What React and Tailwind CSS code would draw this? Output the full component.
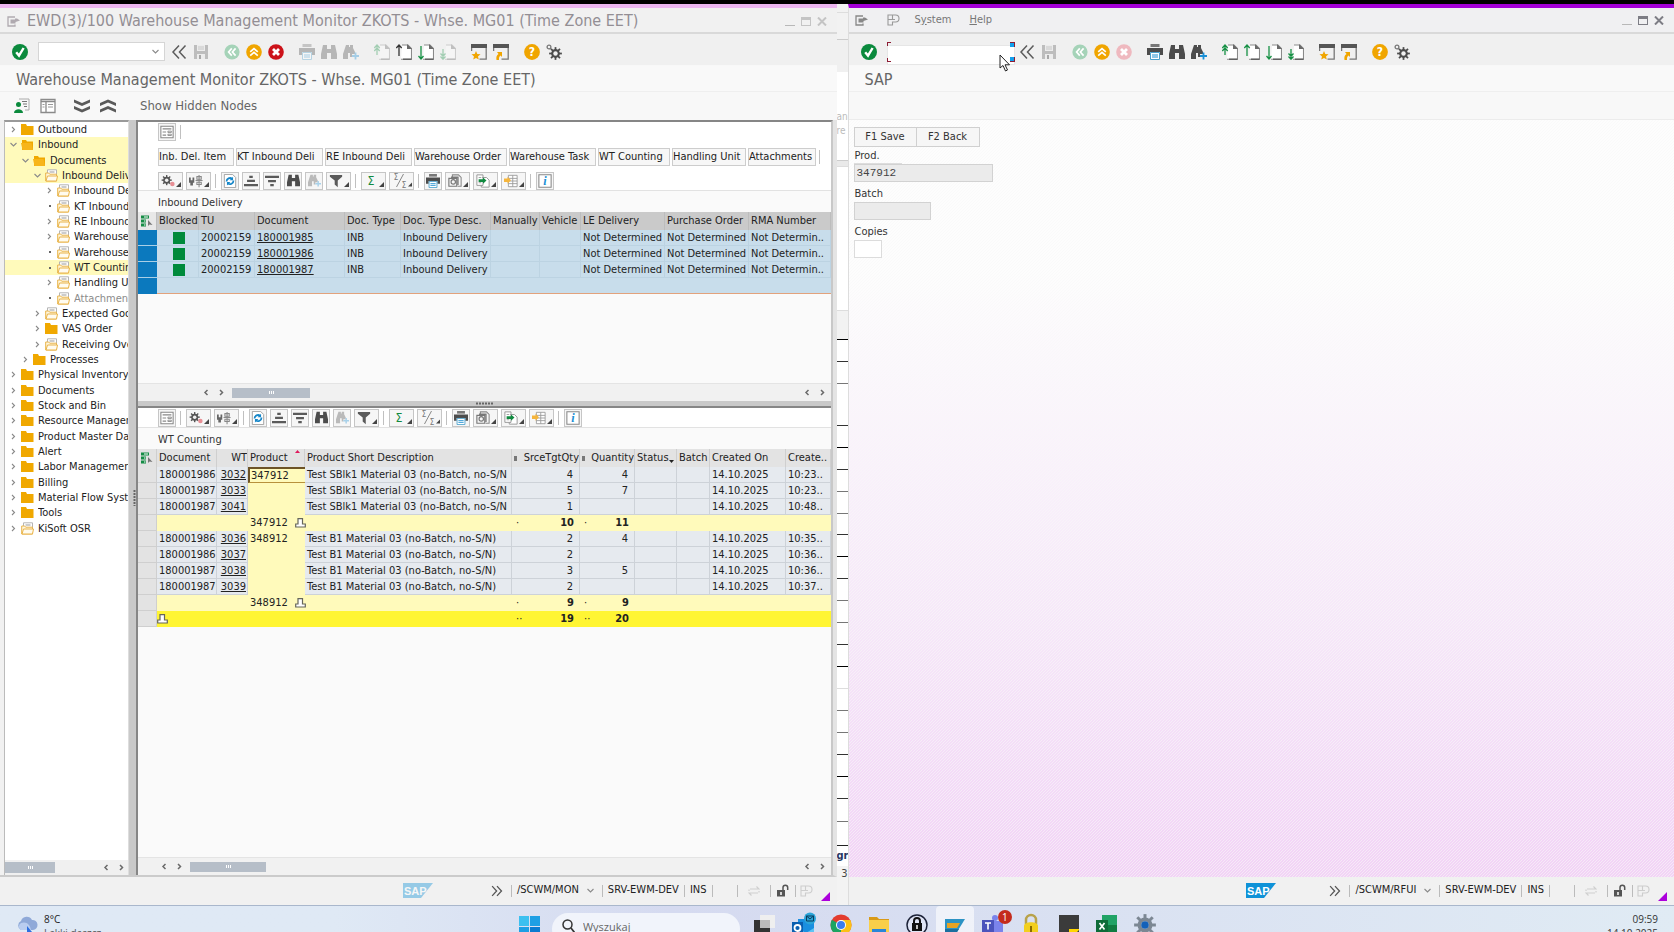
import clsx from "clsx";

const UI = "font-['DejaVu_Sans_Condensed','DejaVu_Sans',sans-serif]";

/* ---------- icons ---------- */

const Svg = ({ size = 16, box = 16, className, children }) => (
  <svg
    width={size}
    height={size}
    viewBox={`0 0 ${box} ${box}`}
    fill="none"
    className={clsx("shrink-0", className)}
    aria-hidden="true"
  >
    {children}
  </svg>
);

const CheckIcon = () => (
  <Svg>
    <circle cx="8" cy="8" r="8" fill="#0b8a3d" />
    <path d="M4.2 8.2 7 11.6 11.6 4" stroke="#fff" strokeWidth="2.4" />
  </Svg>
);

const BackIcon = () => (
  <Svg>
    <circle cx="8" cy="8" r="7.6" fill="#a5d3b8" />
    <path d="M7.8 4.4 4.6 8l3.2 3.6M11.6 4.4 8.4 8l3.2 3.6" stroke="#fff" strokeWidth="1.7" />
  </Svg>
);

const UpIcon = () => (
  <Svg>
    <circle cx="8" cy="8" r="7.8" fill="#f0a500" />
    <path d="M4.2 7.8 8 4.6l3.8 3.2M4.2 11.6 8 8.4l3.8 3.2" stroke="#fff" strokeWidth="1.7" />
  </Svg>
);

const CancelIcon = ({ faded }) => (
  <Svg>
    <circle cx="8" cy="8" r="7.8" fill={faded ? "#efb9bf" : "#cc1219"} />
    <path d="m5 5 6 6M11 5l-6 6" stroke="#fff" strokeWidth="2.8" />
  </Svg>
);

const DoubleLeftIcon = () => (
  <Svg>
    <path d="M8 1.5 2 8l6 6.5M14.5 1.5 8.5 8l6 6.5" stroke="#5c5c5c" strokeWidth="1.5" />
  </Svg>
);

const DoubleRightIcon = () => (
  <Svg size={12}>
    <path d="m1.5 1.5 6 6.5-6 6.5M8 1.5l6 6.5-6 6.5" stroke="#555" strokeWidth="1.7" />
  </Svg>
);

const SaveIcon = () => (
  <Svg>
    <path d="M1 1h14v14H1z" fill="#bdbdbd" />
    <path d="M4 1h8v6H4zM4 10h8v5H4z" fill="#ececec" />
    <path d="M5 3h6M5 5h6" stroke="#c6c6c6" />
    <path d="M6 11h2v4H6z" fill="#a8a8a8" />
  </Svg>
);

const PrintIcon = ({ faded, size }) => (
  <Svg size={size} className={faded ? "opacity-35" : ""}>
    <path d="M3.5 0h9v3h-9z" fill="#777" />
    <path d="M0 4h16v7h-3V8H3v3H0z" fill="#4c4c4c" />
    <path d="M3.5 8.5h9v7h-9z" fill="#fff" stroke="#4aa0cc" />
    <path d="M5 11h6M5 13h6" stroke="#1f8fd0" />
  </Svg>
);

const BinocIcon = ({ faded, plus, size }) => (
  <Svg size={size} className={faded ? "opacity-35" : ""}>
    {plus ? (
      <>
        <path d="M3 1h3v2h1V1h3v3l2 4v2H9v3H7V9H5v6H0v-5l2-6z" fill="#4c4c4c" />
        <path d="M12.5 8.5v7M9 12h7" stroke="#1a8fd6" strokeWidth="1.8" />
      </>
    ) : (
      <path d="M2 1h4v4h4V1h4l2 9v5h-6V9H6v6H0v-5z" fill="#4c4c4c" />
    )}
  </Svg>
);

const PageIcon = ({ down, end, dark, faded }) => (
  <Svg className={faded ? "opacity-35" : ""}>
    <path d="M6 1h6l3.5 3.5v10.7H5" stroke="#8a8a8a" strokeWidth="1.1" fill="#fff" />
    <path d="M11 0v5h5z" fill="#6a6a6a" />
    <path d="M7 15.2h8.5" stroke="#555" strokeWidth="1.3" />
    {down ? (
      <path
        d={end ? "M3 5v10M.5 9.5 3 12.2l2.5-2.7M.5 12.5 3 15.2l2.5-2.7" : "M3 2v13M.5 12 3 15l2.5-3"}
        stroke={dark ? "#333" : "#179145"}
        strokeWidth="1.3"
      />
    ) : (
      <path
        d={end ? "M3 11V1M.3 4 3 1l2.7 3M.3 7 3 4l2.7 3" : "M3 12V1M.3 4 3 1l2.7 3"}
        stroke={dark ? "#333" : "#179145"}
        strokeWidth="1.3"
      />
    )}
  </Svg>
);

const SessionIcon = ({ shortcut }) => (
  <Svg>
    <path d="M0 0h16v4H0z" fill="#555" />
    <path d="M15.2 4v11.2H8.5M.6 4v3" stroke="#777" strokeWidth="1.3" />
    {shortcut ? (
      <path d="M3.5 16c-.5-3 .2-4.8 2-6L4 8h5v5l-1.4-1.6c-1.4 1-1.8 2.3-1.6 4.6z" fill="#f0a500" />
    ) : (
      <path d="m5 7 1.3 3 3.2.3L7 12.4l.8 3.2L5 14l-2.8 1.6.8-3.2L.5 10.3l3.2-.3z" fill="#f0a500" />
    )}
  </Svg>
);

const HelpIcon = () => (
  <Svg>
    <circle cx="8" cy="8" r="7.9" fill="#f0a500" />
    <text x="8" y="12.2" textAnchor="middle" fontSize="12" fontWeight="bold" fill="#fff">
      ?
    </text>
  </Svg>
);

const TEETH = [0, 45, 90, 135, 180, 225, 270, 315];

const GearShape = ({ cx, cy, r, color, hole = "#f1f1f1" }) => (
  <g>
    {TEETH.map((a) => (
      <rect
        key={a}
        x={cx - r * 0.2}
        y={cy - r * 1.45}
        width={r * 0.4}
        height={r * 0.8}
        fill={color}
        transform={`rotate(${a} ${cx} ${cy})`}
      />
    ))}
    <circle cx={cx} cy={cy} r={r} fill={color} />
    <circle cx={cx} cy={cy} r={r * 0.5} fill={hole} />
  </g>
);

const GearIcon = () => (
  <Svg>
    <GearShape cx={9.5} cy={9.5} r={4.4} color="#4c4c4c" />
    <circle cx="3" cy="3" r="1.9" stroke="#777" strokeWidth="1.3" />
  </Svg>
);

const MenuIcon = ({ light }) => (
  <svg width="13" height="11" viewBox="0 0 13 11" fill="none" className="shrink-0" aria-hidden="true">
    <path d="M8 1H1v9h7V8.5" stroke={light ? "#b0aab0" : "#888"} strokeWidth="1.3" />
    <path d="M3.5 3.5H8v-1h2l3 2L8.5 6v1.5h-5z" fill={light ? "#b0aab0" : "#888"} />
  </svg>
);

const PIcon = ({ className, color = "#9a9a9a" }) => (
  <svg width="13" height="12" viewBox="0 0 13 12" fill="none" className={clsx("shrink-0", className)} aria-hidden="true">
    <path d="M1 1h7.5a3.5 3.5 0 0 1 0 7h-3v3H1zM5.5 1v4.5H8M1 5.5h4.5" stroke={color} strokeWidth="1.1" />
  </svg>
);

const UserListIcon = () => (
  <Svg>
    <path d="M5 1h10v11h-4" stroke="#aaa" />
    <path d="M8 3.5h5M9 6h4M10 8.5h3" stroke="#777" />
    <circle cx="4.5" cy="6.5" r="2.5" fill="#0b8a3d" />
    <path d="M0 15c0-5 9-5 9 0z" fill="#0b8a3d" />
  </Svg>
);

const LayoutIcon = () => (
  <Svg>
    <path d="M1 1.5h14v13H1z" fill="#fff" stroke="#8a8a8a" strokeWidth="1.3" />
    <path d="M1 3.5h14M6 3.5v11" stroke="#8a8a8a" strokeWidth="1.3" />
    <path d="M2.5 6.5h2M2.5 9h2M8 6.5h5M8 9h5" stroke="#999" />
  </Svg>
);

const DoubleDown = ({ up }) => (
  <Svg className={up ? "rotate-180" : ""}>
    <path d="M0 1.5 8 5l8-3.5v3L8 8 0 4.500zM0 8l8 3.500L16 8v3l-8 3.500L0 11z" fill="#5a5a5a" />
  </Svg>
);

const FolderIcon = ({ kind }) => (
  <Svg size={13} box={13}>
    {kind === "closed" && <path d="M0 1h5l1 2h6.5v9H0z" fill="#f0a800" />}
    {kind === "open" && (
      <>
        <path d="M1 2h4l1 1.5h6V12H1z" fill="#f0a800" />
        <path d="M0 5h10.5L12 12H1.5z" fill="#f7b51b" />
      </>
    )}
    {kind === "list" && (
      <>
        <path d="M2.5 6V.8h9V6" stroke="#b5b5b5" fill="#fff" />
        <path d="M4.5 3h5" stroke="#999" />
        <path d="M.7 12V4h3l1 1.2h6.8V12z" fill="#fff6dc" stroke="#e9b44a" />
        <path d="M1 12 2.5 7h10l-1 5z" fill="#fffbef" stroke="#e9b44a" />
      </>
    )}
  </Svg>
);

const FormIcon = () => (
  <Svg size={14}>
    <path d="M1 1.5h14v13H1z" fill="#fff" stroke="#888" strokeWidth="1.2" />
    <path d="M3 4.5h10M3 8h4M3 11.5h4" stroke="#888" strokeWidth="1.4" />
    <path d="M9 7h4v1.5H9zM9 10.5h4V12H9z" stroke="#888" />
  </Svg>
);

const RowGearIcon = () => (
  <Svg size={14}>
    <GearShape cx={6.5} cy={7} r={4} color="#555" />
    <circle cx="13" cy="11.5" r="2.6" fill="#e88f95" />
  </Svg>
);

const PlugIcon = () => (
  <Svg size={14}>
    <path d="M0 4h2v3h2V4h2v6H4.5v3h-3v-3H0z" fill="#666" />
    <path d="M9 3h5v3H9zM7.5 7.5h8M9 9.5h5V12H9zM11.5 1v14" stroke="#888" strokeWidth="1.2" />
  </Svg>
);

const RefreshIcon = () => (
  <Svg size={14}>
    <path d="M1.5.5H11L14.5 4v11.5h-13z" fill="#fff" stroke="#999" />
    <path d="M4 8.5a4 4 0 0 1 6.5-3M12 7.5a4 4 0 0 1-6.5 3.2" stroke="#1787c9" strokeWidth="2" />
    <path d="M11.5 3v4h-4zM4.5 13V9h4z" fill="#1787c9" />
  </Svg>
);

const SortIcon = ({ desc }) => (
  <Svg size={14} className={desc ? "rotate-180" : ""}>
    <path d="M6 2h4v2.6H6zM3.5 6.5h9v2.6h-9zM0 11.5h16v2.6H0z" fill="#5a5a5a" />
  </Svg>
);

const FilterIcon = () => (
  <Svg size={14}>
    <path d="M1 1h14v2l-5 4.5V15l-3.5-3V7.5L1 3z" fill="#5a5a5a" />
  </Svg>
);

const SumIcon = () => (
  <Svg size={14}>
    <text x="8" y="13" textAnchor="middle" fontSize="14" fill="#128a40">
      Σ
    </text>
  </Svg>
);

const SubtotalIcon = () => (
  <Svg size={16}>
    <text x="4" y="7" textAnchor="middle" fontSize="8" fill="#777">
      Σ
    </text>
    <path d="M11.5 1 4.5 14" stroke="#888" />
    <text x="12" y="14.5" textAnchor="middle" fontSize="8" fill="#777">
      Σ
    </text>
  </Svg>
);

const ViewsIcon = () => (
  <Svg size={14}>
    <path d="M5 4V1h7l3 3v10h-4" stroke="#888" strokeWidth="1.2" />
    <path d="M1 5h9v9H1zM3.5 3.5h8v9" stroke="#777" strokeWidth="1.3" />
    <circle cx="6" cy="9" r="2.5" stroke="#777" strokeWidth="1.3" />
  </Svg>
);

const ExportIcon = () => (
  <Svg size={14}>
    <path d="M1 1h7v12H1zM7 4h5l3 3v8H6v-2" fill="#fff" stroke="#999" strokeWidth="1.1" />
    <path d="M3 4h3M3 10h3" stroke="#999" />
    <path d="M3 6h5V4l4 3.5L8 11V9H3z" fill="#118a40" />
  </Svg>
);

const GridIcon = () => (
  <Svg size={14}>
    <path d="M5 1.5h10v13H5zM5 5h10M5 8h10M5 11h10M10 1.5v13" fill="#fff" stroke="#999" />
    <path d="M0 5h4V3l4 4-4 4V9H0z" fill="#f5b53c" />
  </Svg>
);

const InfoIcon = () => (
  <Svg size={14}>
    <path d="M1 .8h14v14.4H1z" fill="#fff" stroke="#888" strokeWidth="1.2" />
    <text x="8" y="13" textAnchor="middle" fontSize="14" fontStyle="italic" fontFamily="Liberation Serif" fontWeight="bold" fill="#1a8fd6">
      i
    </text>
  </Svg>
);

const PickIcon = () => (
  <Svg size={12} box={12}>
    <path d="M0 .5h8v3H0zM0 4.5h5v3H0zM0 8.5h5v3H0z" fill="#158c45" />
    <path d="M3 2h4M3 6h1.5M3 10h1.5" stroke="#fff" />
    <path d="M7 5v6l1.5-1.5 3 .5z" fill="#777" />
  </Svg>
);

const TotalIcon = () => (
  <svg width="11" height="10" viewBox="0 0 11 10" fill="none" className="inline-block" aria-hidden="true">
    <path d="M3 .7h4.5V6h2.8v3H.7V6H3z" fill="#fff" stroke="#66665a" strokeWidth="1.2" />
  </svg>
);

const Lock = () => (
  <svg width="12" height="13" viewBox="0 0 12 13" fill="none" aria-hidden="true">
    <path d="M0 6h8v6.5H0z" fill="#555" />
    <path d="M6 6V3.5a2.3 2.3 0 0 1 4.7 0V6" stroke="#555" strokeWidth="1.5" />
    <path d="M4 8v3" stroke="#fff" strokeWidth="1.5" />
  </svg>
);

const SwapIcon = () => (
  <svg width="12" height="10" viewBox="0 0 12 10" fill="none" aria-hidden="true">
    <path d="M2 3h9L8.5.5M10 7H1l2.5 2.5M1 5V3.5M11 5v1.5" stroke="#cfcfcf" strokeWidth="1.2" />
  </svg>
);

const SapLogo = ({ faded }) => (
  <svg width="30" height="15" viewBox="0 0 30 15" className={faded ? "opacity-40" : ""} aria-hidden="true">
    <path d="M0 0h30L18 15H0z" fill="#0f92d8" />
    <text x="1" y="11.5" fontSize="11" fontWeight="bold" fontFamily="Liberation Sans Narrow, Liberation Sans" fill="#fff">
      SAP
    </text>
  </svg>
);

/* ---------- shared window parts ---------- */

const WindowControls = ({ light }) => (
  <div className={clsx("flex items-center gap-[6px]", light ? "text-[#c4c4c4]" : "text-[#7d7d85]")}>
    <button aria-label="Minimize" className="flex h-2.5 w-2.5 items-end">
      <span className="h-px w-full bg-[#b8b8b8]" />
    </button>
    <button aria-label="Maximize" className="h-[9px] w-2.5 border border-t-3 border-current" />
    <button aria-label="Close">
      <svg width="10" height="9" viewBox="0 0 10 9" aria-hidden="true">
        <path d="m1 .5 8 8M9 .5l-8 8" stroke="currentColor" strokeWidth="2" />
      </svg>
    </button>
  </div>
);

const ToolButton = ({ label, children }) => (
  <button aria-label={label} className="flex h-4 w-4 items-center justify-center">
    {children}
  </button>
);

const CommandBar = ({ active }) => (
  <div className="flex h-8 shrink-0 items-center border-b border-[#f8f8f8] bg-[#f0f0f0] pt-1 pl-3">
    <ToolButton label="Enter">
      <CheckIcon />
    </ToolButton>
    {active ? (
      <div className="relative ml-2.5 h-5 w-32">
        <input aria-label="Command" className="h-full w-full border border-[#e6e6e6] bg-white px-1 text-[11px] outline-none" />
        <span className="absolute top-0 left-0 h-1 w-1 border-t border-l border-[#8d1c34]" />
        <span className="absolute bottom-0 left-0 h-1 w-1 border-b border-l border-[#8d1c34]" />
        <span className="absolute top-0 right-0 h-[5px] w-[5px] border-t border-r border-[#8d1c34] bg-[#12a0ec]" />
        <span className="absolute right-0 bottom-0 h-[5px] w-[5px] border-r border-b border-[#8d1c34] bg-[#12a0ec]" />
        <svg width="12" height="18" viewBox="0 0 12 18" className="absolute top-3 left-28 z-10" aria-hidden="true">
          <path d="M1 1v13l3-2.5L6.500 17l2-1L6 10.800h4.500z" fill="#fff" stroke="#222" />
        </svg>
      </div>
    ) : (
      <div className="ml-2.5 flex h-[19px] w-[127px] items-center border border-[#d5d5d5] bg-white pr-1">
        <input aria-label="Command" className="h-full w-0 flex-1 px-1 text-[11px] outline-none" />
        <button aria-label="Command history">
          <Chevron dir="down" />
        </button>
      </div>
    )}
    <div className={clsx("flex gap-1.5", active ? "ml-1" : "ml-1.5")}>
      <ToolButton label="Collapse">
        <DoubleLeftIcon />
      </ToolButton>
      <ToolButton label="Save">
        <SaveIcon />
      </ToolButton>
    </div>
    <div className="ml-[15px] flex gap-[15px]">
      <div className="flex gap-1.5">
        <ToolButton label="Back">
          <BackIcon />
        </ToolButton>
        <ToolButton label="Exit">
          <UpIcon />
        </ToolButton>
        <ToolButton label="Cancel">
          <CancelIcon faded={active} />
        </ToolButton>
      </div>
      <div className="flex gap-1.5">
        <ToolButton label="Print">
          <PrintIcon faded={!active} />
        </ToolButton>
        <ToolButton label="Find">
          <BinocIcon faded={!active} />
        </ToolButton>
        <ToolButton label="Find next">
          <BinocIcon plus faded={!active} />
        </ToolButton>
      </div>
      <div className="flex gap-1.5">
        <ToolButton label="First page">
          <PageIcon end faded={!active} />
        </ToolButton>
        <ToolButton label="Previous page">
          <PageIcon dark={!active} />
        </ToolButton>
        <ToolButton label="Next page">
          <PageIcon down />
        </ToolButton>
        <ToolButton label="Last page">
          <PageIcon down end faded={!active} />
        </ToolButton>
      </div>
      <div className="flex gap-1.5">
        <ToolButton label="New session">
          <SessionIcon />
        </ToolButton>
        <ToolButton label="Create shortcut">
          <SessionIcon shortcut />
        </ToolButton>
      </div>
      <div className="flex gap-1.5">
        <ToolButton label="Help">
          <HelpIcon />
        </ToolButton>
        <ToolButton label="Customize">
          <GearIcon />
        </ToolButton>
      </div>
    </div>
  </div>
);

const CHEVRONS = {
  down: "m1.5 3 3 3 3-3",
  right: "m3 2 2.5 2.5L3 7",
  left: "M5.5 2 3 4.500 5.500 7",
};

const Chevron = ({ dir, bold }) => (
  <svg width="9" height="9" viewBox="0 0 9 9" fill="none" className="shrink-0" aria-hidden="true">
    <path d={CHEVRONS[dir]} stroke={bold ? "#6a6a6a" : "#8a8a8a"} strokeWidth={bold ? 1.5 : 1.1} />
  </svg>
);

const Bar = () => <span className="h-3 w-px bg-[#bbb]" />;

const StatusBar = ({ tcode, faded }) => (
  <footer className="flex h-7 shrink-0 items-center justify-end bg-[#f1f1f1] pb-px text-[11px] text-[#222]">
    <SapLogo faded={faded} />
    <div className={clsx("flex items-center", faded ? "ml-[58px]" : "ml-[53px]")}>
      <button aria-label="Expand status">
        <DoubleRightIcon />
      </button>
      <div className="ml-2 flex items-center gap-[5px]">
        <Bar />
        <span>{tcode}</span>
        <span className="mx-0.5">
          <Chevron dir="down" />
        </span>
        <Bar />
        <span>SRV-EWM-DEV</span>
        <Bar />
        <span>INS</span>
        <Bar />
      </div>
      <div className="ml-6 flex items-center">
        <Bar />
        <span className="ml-2.5">
          <SwapIcon />
        </span>
        <span className="mr-1.5 ml-2.5 flex">
          <Bar />
        </span>
        <Lock />
        <span className="mr-1 ml-1.5 flex">
          <Bar />
        </span>
        <PIcon color="#cdcdcd" />
      </div>
    </div>
    <svg width="9" height="9" viewBox="0 0 9 9" className="mt-3 mr-[7px] ml-2" aria-hidden="true">
      <path d="M9 0v9H0z" fill="#ac00dc" />
    </svg>
  </footer>
);

/* ---------- navigation tree ---------- */

const TREE = [
  [0, ">", "closed", "Outbound"],
  [0, "v", "open", "Inbound", "hl"],
  [1, "v", "open", "Documents", "hl"],
  [2, "v", "list", "Inbound Delivery", "hl"],
  [3, ">", "list", "Inbound Deliv"],
  [3, ".", "list", "KT Inbound Deli"],
  [3, ">", "list", "RE Inbound Deli"],
  [3, ">", "list", "Warehouse Order"],
  [3, ".", "list", "Warehouse Task"],
  [3, ".", "list", "WT Counting", "hl"],
  [3, ">", "list", "Handling Unit"],
  [3, ".", "list", "Attachments", "off"],
  [2, ">", "list", "Expected Goods"],
  [2, ">", "closed", "VAS Order"],
  [2, ">", "list", "Receiving Overview"],
  [1, ">", "closed", "Processes"],
  [0, ">", "closed", "Physical Inventory"],
  [0, ">", "closed", "Documents"],
  [0, ">", "closed", "Stock and Bin"],
  [0, ">", "closed", "Resource Management"],
  [0, ">", "closed", "Product Master Data"],
  [0, ">", "closed", "Alert"],
  [0, ">", "closed", "Labor Management"],
  [0, ">", "closed", "Billing"],
  [0, ">", "closed", "Material Flow System"],
  [0, ">", "closed", "Tools"],
  [0, ">", "list", "KiSoft OSR"],
];

const INDENT = ["pl-1", "pl-4", "pl-7", "pl-10"];

const Tree = () => (
  <nav className="flex w-[125px] shrink-0 flex-col border-t-2 border-r border-l border-t-[#999] border-r-[#ddd] border-l-[#bbb] bg-white">
    <ul className="grid h-[414px] auto-rows-fr">
      {TREE.map(([level, state, kind, label, mark], i) => (
        <li
          key={i}
          className={clsx(
            "flex items-center overflow-hidden text-[11px] leading-[15px] whitespace-nowrap",
            INDENT[level],
            mark === "hl" && "bg-[#fffabb]",
            mark === "off" ? "text-[#8b8b8b]" : "text-[#222]"
          )}
        >
          <span className="flex w-[9px] shrink-0 justify-center">
            {state === "." ? (
              <span className="h-0.5 w-0.5 bg-[#666]" />
            ) : (
              <Chevron dir={state === "v" ? "down" : "right"} />
            )}
          </span>
          <span className="mr-1 ml-[3px]">
            <FolderIcon kind={kind} />
          </span>
          <span className="min-w-0 flex-1 overflow-hidden">{label}</span>
        </li>
      ))}
    </ul>
    <div className="mt-auto flex h-[15px] items-center bg-[#f0f0f0] pr-0.5">
      <div className="flex h-[11px] w-[50px] items-center justify-center bg-[#b6bec8]">
        <Grip />
      </div>
      <div className="ml-auto flex gap-1.5">
        <Chevron dir="left" bold />
        <Chevron dir="right" bold />
      </div>
    </div>
  </nav>
);

const Grip = () => (
  <span className="flex gap-px">
    <span className="h-[3px] w-px bg-white" />
    <span className="h-[3px] w-px bg-white" />
    <span className="h-[3px] w-px bg-white" />
  </span>
);

/* ---------- ALV grids ---------- */

const BoxButton = ({ label, split, children }) => (
  <button
    aria-label={label}
    className={clsx(
      "flex h-[18px] items-center border border-[#c6c6c6] bg-[#f6f6f6]",
      split ? "w-[25px] justify-between pl-0.5" : "w-[18px] justify-center"
    )}
  >
    {children}
    {split && (
      <svg width="5" height="5" viewBox="0 0 5 5" className="mt-2 mr-px" aria-hidden="true">
        <path d="M5 0v5H0z" fill="#444" />
      </svg>
    )}
  </button>
);

const Sep = () => <span className="mr-0.5 ml-px h-3.5 w-px bg-[#c0c0c0]" />;

const GridToolbar = ({ form }) => (
  <div className="flex h-5 shrink-0 items-center gap-[3px] border-b border-[#e2e2e2] bg-white pl-5">
    {form && (
      <>
        <BoxButton label="Form view">
          <FormIcon />
        </BoxButton>
        <Sep />
      </>
    )}
    <BoxButton label="Settings" split>
      <RowGearIcon />
    </BoxButton>
    <BoxButton label="Connections" split>
      <PlugIcon />
    </BoxButton>
    <Sep />
    <BoxButton label="Refresh">
      <RefreshIcon />
    </BoxButton>
    <BoxButton label="Sort ascending">
      <SortIcon />
    </BoxButton>
    <BoxButton label="Sort descending">
      <SortIcon desc />
    </BoxButton>
    <BoxButton label="Find">
      <BinocIcon size={13} />
    </BoxButton>
    <BoxButton label="Find next">
      <BinocIcon size={13} plus faded />
    </BoxButton>
    <BoxButton label="Filter" split>
      <FilterIcon />
    </BoxButton>
    <Sep />
    <BoxButton label="Total" split>
      <SumIcon />
    </BoxButton>
    <BoxButton label="Subtotal" split>
      <SubtotalIcon />
    </BoxButton>
    <Sep />
    <BoxButton label="Print">
      <PrintIcon size={14} />
    </BoxButton>
    <BoxButton label="Views" split>
      <ViewsIcon />
    </BoxButton>
    <BoxButton label="Export" split>
      <ExportIcon />
    </BoxButton>
    <BoxButton label="Choose layout" split>
      <GridIcon />
    </BoxButton>
    <Sep />
    <BoxButton label="Information">
      <InfoIcon />
    </BoxButton>
  </div>
);

const GridTitle = ({ children }) => (
  <h3 className="flex h-[21px] shrink-0 items-center pt-0.5 pl-5 text-[11px] leading-4 text-[#333]">{children}</h3>
);

const ScrollRow = ({ className, thumb }) => (
  <div className="flex h-[18px] shrink-0 items-center border-t border-[#e4e4e4] bg-[#f1f1f1] pr-1">
    <div className={clsx("flex gap-1.5", className)}>
      <Chevron dir="left" bold />
      <Chevron dir="right" bold />
    </div>
    <div className={clsx("ml-1.5 flex h-2.5 items-center justify-center bg-[#b6bec8]", thumb)}>
      <Grip />
    </div>
    <div className="ml-auto flex gap-1.5">
      <Chevron dir="left" bold />
      <Chevron dir="right" bold />
    </div>
  </div>
);

const NODE_BUTTONS = [
  ["Inb. Del. Item", "w-[76px]"],
  ["KT Inbound Deli", "w-[87px]"],
  ["RE Inbound Deli", "w-[87px]"],
  ["Warehouse Order", "w-[93px]"],
  ["Warehouse Task", "w-[87px]"],
  ["WT Counting", "w-[72px]"],
  ["Handling Unit", "w-[74px]"],
  ["Attachments", "w-[68px]"],
];

const DELIVERY_COLS = [
  ["", "w-[19px]"],
  ["Blocked", "w-[42px]"],
  ["TU", "w-[56px]"],
  ["Document", "w-[90px]"],
  ["Doc. Type", "w-[56px]"],
  ["Doc. Type Desc.", "w-[90px]"],
  ["Manually", "w-[49px]"],
  ["Vehicle", "w-[41px]"],
  ["LE Delivery", "w-[84px]"],
  ["Purchase Order", "w-[84px]"],
  ["RMA Number", ""],
];

const DELIVERIES = ["180001985", "180001986", "180001987"];

const cell = "h-4 overflow-hidden whitespace-nowrap border-r border-b py-0 pl-0.5 leading-[14px]";
const blue = "border-[#bcd3e2]";

const DeliveryTable = () => (
  <table className="w-full table-fixed border-separate border-spacing-0 text-[11px] text-[#222]">
    <colgroup>
      {DELIVERY_COLS.map(([, w], i) => (
        <col key={i} className={w} />
      ))}
    </colgroup>
    <thead>
      <tr className="bg-[#cacaca] text-left">
        {DELIVERY_COLS.map(([name], i) =>
          i === 0 ? (
            <th key={i} scope="col" aria-label="Selection" className="h-[18px] border-r border-[#bdbdbd] bg-[#e8e8e8] p-0">
              <span className="flex justify-center">
                <PickIcon />
              </span>
            </th>
          ) : (
            <th
              key={i}
              scope="col"
              className="h-[18px] overflow-hidden border-r border-[#bdbdbd] py-0 pl-0.5 font-normal whitespace-nowrap"
            >
              {name}
            </th>
          )
        )}
      </tr>
    </thead>
    <tbody className="bg-[#c8ddeb]">
      {DELIVERIES.map((doc) => (
        <tr key={doc}>
          <td className="border-b border-[#a9cfe6] bg-[#0b79be]" />
          <td className={clsx(cell, blue)}>
            <span className="mx-auto block h-3 w-3 bg-[#008a3b]" />
          </td>
          <td className={clsx(cell, blue)}>20002159</td>
          <td className={clsx(cell, blue)}>
            <a href="#" className="underline">
              {doc}
            </a>
          </td>
          <td className={clsx(cell, blue)}>INB</td>
          <td className={clsx(cell, blue)}>Inbound Delivery</td>
          <td className={clsx(cell, blue)} />
          <td className={clsx(cell, blue)} />
          <td className={clsx(cell, blue)}>Not Determined</td>
          <td className={clsx(cell, blue)}>Not Determined</td>
          <td className={clsx(cell, blue)}>Not Determin..</td>
        </tr>
      ))}
      <tr>
        <td className="h-4 bg-[#0b79be] p-0" />
        <td colSpan={10} className="h-4 border-b border-[#e2a27c] p-0" />
      </tr>
    </tbody>
  </table>
);

const COUNT_ROWS = [
  { doc: "180001986", wt: "3032", prod: "347912", desc: "Test SBlk1 Material 03 (no-Batch, no-S/N", src: "4", qty: "4", time: "10:23..", focus: true },
  { doc: "180001987", wt: "3033", desc: "Test SBlk1 Material 03 (no-Batch, no-S/N", src: "5", qty: "7", time: "10:23.." },
  { doc: "180001987", wt: "3041", desc: "Test SBlk1 Material 03 (no-Batch, no-S/N", src: "1", time: "10:48.." },
  { sub: true, prod: "347912", src: "10", qty: "11" },
  { doc: "180001986", wt: "3036", prod: "348912", desc: "Test B1 Material 03 (no-Batch, no-S/N)", src: "2", qty: "4", time: "10:35.." },
  { doc: "180001986", wt: "3037", desc: "Test B1 Material 03 (no-Batch, no-S/N)", src: "2", time: "10:36.." },
  { doc: "180001987", wt: "3038", desc: "Test B1 Material 03 (no-Batch, no-S/N)", src: "3", qty: "5", time: "10:36.." },
  { doc: "180001987", wt: "3039", desc: "Test B1 Material 03 (no-Batch, no-S/N)", src: "2", time: "10:37.." },
  { sub: true, prod: "348912", src: "9", qty: "9" },
];

const SumCell = ({ dots, value }) => (
  <td className="h-4 p-0 pr-1.5 pl-1">
    <span className="flex justify-between leading-[14px]">
      <span>{dots}</span>
      <b>{value}</b>
    </span>
  </td>
);

const head = "h-[18px] overflow-hidden whitespace-nowrap border-r border-[#cfcfcf] py-0 pl-0.5 font-normal";
const gray = "border-[#cdd2d8]";

const CountTable = () => (
  <table className="w-full table-fixed border-separate border-spacing-0 text-[11px] text-[#222]">
    <colgroup>
      <col className="w-[19px]" />
      <col className="w-[60px]" />
      <col className="w-[31px]" />
      <col className="w-[57px]" />
      <col className="w-[207px]" />
      <col className="w-[68px]" />
      <col className="w-[55px]" />
      <col className="w-[42px]" />
      <col className="w-[33px]" />
      <col className="w-[76px]" />
      <col />
    </colgroup>
    <thead>
      <tr className="bg-[#e3e3e3] text-left">
        <th scope="col" aria-label="Selection" className="border-r border-[#cfcfcf] p-0">
          <span className="flex justify-center">
            <PickIcon />
          </span>
        </th>
        <th scope="col" className={head}>Document</th>
        <th scope="col" className={clsx(head, "text-right")}>WT</th>
        <th scope="col" className={head}>
          <span className="flex justify-between">
            Product
            <svg width="5" height="4" viewBox="0 0 5 4" className="mr-1" aria-hidden="true">
              <path d="M2.5 0 5 3H0z" fill="#e0185c" />
            </svg>
          </span>
        </th>
        <th scope="col" className={head}>Product Short Description</th>
        <th scope="col" className={head}>
          <span className="flex items-center justify-between">
            <span className="h-[5px] w-[3px] bg-[#777]" />
            SrceTgtQty
          </span>
        </th>
        <th scope="col" className={head}>
          <span className="flex items-center justify-between">
            <span className="h-[5px] w-[3px] bg-[#777]" />
            Quantity
          </span>
        </th>
        <th scope="col" className={head}>
          <span className="flex items-end">
            Status
            <svg width="5" height="7" viewBox="0 0 5 7" aria-hidden="true">
              <path d="M0 1h5L2.5 4z" fill="#222" />
            </svg>
          </span>
        </th>
        <th scope="col" className={head}>Batch</th>
        <th scope="col" className={head}>Created On</th>
        <th scope="col" className={head}>Create..</th>
      </tr>
    </thead>
    <tbody>
      {COUNT_ROWS.map((r, i) =>
        r.sub ? (
          <tr key={i} className="bg-[#fffabb]">
            <td className="border-r border-b border-[#cfcfcf] bg-[#e3e3e3]" />
            <td colSpan={2} />
            <td colSpan={2} className="h-4 p-0 pl-0.5 leading-[14px]">
              <span className="flex items-center gap-[7px]">
                {r.prod}
                <TotalIcon />
              </span>
            </td>
            <SumCell dots="·" value={r.src} />
            <SumCell dots="·" value={r.qty} />
            <td colSpan={4} />
          </tr>
        ) : (
          <tr key={i} className="bg-[#e6eaef]">
            <td className="border-r border-b border-[#cfcfcf] bg-[#e3e3e3]" />
            <td className={clsx(cell, gray)}>{r.doc}</td>
            <td className={clsx(cell, gray, "pr-px text-right")}>
              <a href="#" className="underline">
                {r.wt}
              </a>
            </td>
            <td
              className={clsx(
                "h-4 bg-[#fffabb] p-0 leading-[14px]",
                r.focus ? "border-t-2 border-b border-l-2 border-[#6d5326] border-b-[#b8913c] pl-px" : "pl-0.5"
              )}
            >
              {r.focus ? <span className="block h-[13px] leading-[13px]">{r.prod}</span> : r.prod}
            </td>
            <td className={clsx(cell, gray)}>{r.desc}</td>
            <td className={clsx(cell, gray, "pr-1.5 text-right")}>{r.src}</td>
            <td className={clsx(cell, gray, "pr-1.5 text-right")}>{r.qty}</td>
            <td className={clsx(cell, gray)} />
            <td className={clsx(cell, gray)} />
            <td className={clsx(cell, gray)}>14.10.2025</td>
            <td className={clsx(cell, gray)}>{r.time}</td>
          </tr>
        )
      )}
      <tr className="bg-[#fff533]">
        <td className="border-r border-b border-[#cfcfcf] bg-[#e3e3e3]" />
        <td colSpan={4} className="h-4 p-0 leading-[14px]">
          <TotalIcon />
        </td>
        <SumCell dots="··" value="19" />
        <SumCell dots="··" value="20" />
        <td colSpan={4} />
      </tr>
    </tbody>
  </table>
);

/* ---------- windows ---------- */

const MonitorWindow = () => (
  <section className="flex min-w-0 flex-[837] flex-col border-t-4 border-[#ecb6f0] bg-[#f1f1f1]">
    <header className="flex h-[26px] shrink-0 items-center border-b-2 border-[#d9d9d9] pt-0.5 pr-2.5 pl-[7px]">
      <MenuIcon light />
      <h1 className="ml-[7px] flex-1 text-[16px] leading-6 whitespace-nowrap text-[#938e94]">
        EWD(3)/100 Warehouse Management Monitor ZKOTS - Whse. MG01 (Time Zone EET)
      </h1>
      <WindowControls light />
    </header>
    <CommandBar />
    <h2 className="flex h-[26px] shrink-0 items-center border-b border-[#efefef] bg-[#f9f9f9] pt-0.5 pl-4 text-[16px] leading-6 whitespace-nowrap text-[#666]">
      Warehouse Management Monitor ZKOTS - Whse. MG01 (Time Zone EET)
    </h2>
    <div className="flex h-7 shrink-0 items-center bg-[#f8f8f8] pl-3.5 text-[#666]">
      <ToolButton label="Select user">
        <UserListIcon />
      </ToolButton>
      <button aria-label="Layout" className="ml-2.5">
        <LayoutIcon />
      </button>
      <button aria-label="Expand all" className="ml-[18px]">
        <DoubleDown />
      </button>
      <button aria-label="Collapse all" className="ml-2.5">
        <DoubleDown up />
      </button>
      <button className="ml-6 text-[13px]">Show Hidden Nodes</button>
    </div>

    <div className="flex min-h-0 flex-1 border-r-4 border-b-2 border-[#cbcbcb] border-r-[#e4e4e4] pl-1">
      <Tree />
      <div className="flex w-[9px] shrink-0 flex-col justify-center border-r-2 border-[#868686] bg-[#c9c9c9]">
        <svg width="3" height="16" viewBox="0 0 3 16" className="ml-1" aria-hidden="true">
          <path d="M1.5 0v16" stroke="#666" strokeWidth="2" strokeDasharray="2 1" />
        </svg>
      </div>
      <div className="flex min-w-0 flex-1 flex-col border-t-2 border-r-2 border-[#868686] border-r-[#c8c8c8] bg-[#fafafa]">
        <div className="flex h-[279px] shrink-0 flex-col">
          <div className="flex h-6 shrink-0 items-center gap-[3px] bg-white pb-1 pl-5">
            <BoxButton label="Form view">
              <FormIcon />
            </BoxButton>
            <Sep />
          </div>
          <div className="flex h-[25px] shrink-0 items-center gap-0.5 bg-white pb-1 pl-5 text-[11px] text-[#222]">
            {NODE_BUTTONS.map(([label, w]) => (
              <button
                key={label}
                className={clsx("h-[18px] shrink-0 border border-[#cdcdcd] bg-[#f7f7f7] text-left leading-4 whitespace-nowrap", w)}
              >
                {label}
              </button>
            ))}
            <Sep />
          </div>
          <GridToolbar />
          <GridTitle>Inbound Delivery</GridTitle>
          <DeliveryTable />
          <div className="flex-1" />
          <ScrollRow className="ml-16" thumb="w-[78px]" />
        </div>
        <div className="flex h-[7px] shrink-0 items-center justify-center border-b-2 border-[#868686] bg-[#c9c9c9]">
          <svg width="17" height="3" viewBox="0 0 17 3" aria-hidden="true">
            <path d="M0 1.5h17" stroke="#666" strokeWidth="2" strokeDasharray="2 1" />
          </svg>
        </div>
        <div className="flex min-h-0 flex-1 flex-col">
          <GridToolbar form />
          <GridTitle>WT Counting</GridTitle>
          <CountTable />
          <div className="flex-1" />
          <ScrollRow className="ml-[22px]" thumb="w-[76px]" />
        </div>
      </div>
    </div>
    <StatusBar tcode="/SCWM/MON" faded />
  </section>
);

const SLIVER = [
  "h-[9px] bg-[#f2f2f2] border-[#ddd]",
  "h-[27px] bg-[#f2f2f2] border-[#ccc]",
  "h-8 bg-[#f0f0f0] border-[#f0f0f0]",
  "h-[89px] border-[#ccc]",
  "h-1.5 bg-[#e9e9e9] border-[#ddd]",
  "h-36 border-[#ddd]",
  "h-[29px] bg-[#f2f2f2] border-black",
  "h-[22px] border-[#333]",
  "h-[22px] border-[#777]",
  "h-[42px] border-[#333]",
  "h-[22px] border-black",
  "h-[22px] border-[#333]",
  "h-[22px] border-[#777]",
  "h-[22px] border-[#777]",
  "h-[21px] border-[#333]",
  "h-[22px] border-black",
  "h-[22px] border-[#333]",
  "h-[22px] border-[#777]",
  "h-[22px] border-[#777]",
  "h-[22px] border-[#333]",
  "h-[22px] border-black",
  "h-[22px] border-[#ddd]",
  "h-[22px] border-[#777]",
  "h-[22px] border-[#777]",
  "h-[22px] border-[#333]",
  "h-[22px] border-black",
  "h-[22px] border-[#333]",
  "h-[23px] border-[#777]",
  "h-6 border-[#222]",
];

/* Spreadsheet edge that shows between the two windows */
const BackgroundSliver = () => (
  <div className="flex w-[11px] shrink-0 flex-col overflow-hidden bg-white">
    {SLIVER.map((c, i) => (
      <div key={i} className={clsx("w-full shrink-0 overflow-hidden border-b", c)}>
        {i === 3 && (
          <div className="pt-[38px] text-[10px] leading-[14px] whitespace-nowrap text-[#bbb]">
            <p>ani</p>
            <p>re w</p>
          </div>
        )}
      </div>
    ))}
    <div className="h-5 shrink-0 text-[11px] leading-5 font-bold text-[#27365f]">gr</div>
    <div className="flex-1 bg-[#f3f3f3] text-right text-[11px] leading-4 text-[#444]">3</div>
  </div>
);

const RfWindow = () => (
  <section className="flex min-w-0 flex-[826] flex-col border-t-4 border-l border-[#a400d8] border-l-[#ddd] bg-[#f1f1f1]">
    <header className="flex h-[26px] shrink-0 items-center border-b-2 border-[#d9d9d9] bg-[#f0f0f2] pr-2.5 pl-1.5 text-[11px] text-[#777]">
      <MenuIcon />
      <PIcon className="ml-[19px]" />
      <button className="ml-[15px]">
        S<span className="underline">y</span>stem
      </button>
      <button className="ml-[18px]">
        <span className="underline">H</span>elp
      </button>
      <div className="flex-1" />
      <WindowControls />
    </header>
    <CommandBar active />
    <h2 className="flex h-[26px] shrink-0 items-center border-b border-[#efefef] bg-[#f9f9f9] pt-0.5 pl-4 text-[16px] leading-6 text-[#666]">
      SAP
    </h2>
    <div className="h-7 shrink-0 border-b border-[#ececec] bg-[#f8f8f8]" />
    <div className="relative min-h-0 flex-1 bg-linear-to-b from-[#fdfdfd] from-20% via-[#f6e8f9] via-65% to-[#f2d3f6]">
      <div className="absolute inset-0 bg-[linear-gradient(135deg,transparent_40%,#f8f8f8_40%,#f8f8f8_60%,transparent_60%)] bg-size-[3px_3px] opacity-60" />
      <form className="relative flex flex-col items-start pt-[7px] pl-[5px] text-[11px] text-[#333]">
        <div className="flex">
          <button type="button" className="h-5 w-[63px] border border-[#d0d0d0] bg-[#f6f6f6]">
            F1 Save
          </button>
          <button type="button" className="h-5 w-[63px] border border-l-0 border-[#d0d0d0] bg-[#f6f6f6]">
            F2 Back
          </button>
        </div>
        <label htmlFor="prod" className="mt-px h-4 w-12 border-b border-[#ddd] pl-px leading-4">
          Prod.
        </label>
        <input
          id="prod"
          readOnly
          defaultValue="347912"
          className="h-[18px] w-[139px] border border-[#d2d2d2] bg-[#ebebeb] px-0.5 font-['Liberation_Mono',monospace] text-[11px] text-[#444]"
        />
        <label htmlFor="batch" className="mt-0.5 h-[18px] pl-px leading-5">
          Batch
        </label>
        <input id="batch" readOnly className="h-[18px] w-[77px] border border-[#d2d2d2] bg-[#ebebeb] px-0.5" />
        <label htmlFor="copies" className="mt-0.5 h-[18px] pl-px leading-5">
          Copies
        </label>
        <input id="copies" className="h-[18px] w-7 border border-[#dcdcdc] bg-white px-0.5" />
      </form>
    </div>
    <StatusBar tcode="/SCWM/RFUI" />
  </section>
);

/* ---------- taskbar ---------- */

const WinLogo = () => (
  <Svg size={21} box={21}>
    <path d="M0 0h10v10H0z" fill="#3cc0f0" />
    <path d="M11 0h10v10H11z" fill="#1e9fe4" />
    <path d="M0 11h10v10H0z" fill="#1e9fe4" />
    <path d="M11 11h10v10H11z" fill="#0b7bd0" />
  </Svg>
);

const TASKS = [
  {
    name: "Task view",
    art: (
      <>
        <path d="M0 6h16v16H0z" fill="#333" />
        <path d="M6 1h15v13H6z" fill="#efefef" />
        <path d="M6 6h10v8H6z" fill="#bbb" />
      </>
    ),
  },
  {
    name: "Outlook",
    art: (
      <>
        <path d="M6 5h16v17H6z" fill="#1a8fe0" />
        <path d="m6 14 8 5 8-5v8H6z" fill="#5cc4f5" />
        <path d="M0 8h11v12H0z" fill="#0a5fb0" />
        <circle cx="5.5" cy="14" r="3" stroke="#fff" strokeWidth="1.8" />
        <circle cx="18" cy="4.5" r="6" fill="#2aa4d8" />
        <path d="M14.5 2h7v5h-7zl3.5 3 3.5-3" stroke="#0b3c5c" />
      </>
    ),
  },
  {
    name: "Chrome",
    art: (
      <>
        <circle cx="11" cy="11" r="10.5" fill="#e33b2e" />
        <path d="M11 11 1.9 5.8A10.5 10.5 0 0 0 11 21.5z" fill="#1da462" />
        <path d="M11 6h9.3A10.5 10.5 0 0 1 11 21.5z" fill="#fbc116" />
        <circle cx="11" cy="11" r="5" fill="#fff" />
        <circle cx="11" cy="11" r="4" fill="#3b7ded" />
      </>
    ),
  },
  {
    name: "File Explorer",
    art: (
      <>
        <path d="M1 3h8l2 2h10v5H1z" fill="#d99a17" />
        <path d="M1 6h20v16H1z" fill="#f9cf4a" />
        <path d="M4 15h14v7H4z" fill="#2a86d8" />
      </>
    ),
  },
  {
    name: "KeePass",
    art: (
      <>
        <circle cx="11" cy="11" r="10" fill="#dfe4f5" stroke="#1c2238" strokeWidth="1.5" />
        <path d="M6 9h10v8H6z" fill="#111" />
        <path d="M8 9V7a3 3 0 0 1 6 0v2" stroke="#111" strokeWidth="2" />
        <path d="M11 11v4" stroke="#fff" strokeWidth="1.5" />
      </>
    ),
  },
  {
    name: "SAP Logon",
    active: true,
    art: (
      <>
        <path d="M1 5h20l-8 13H1z" fill="#2c93c4" />
        <path d="M3 9h13l-3 5H3z" fill="#e6a323" />
        <path d="M1 15h14l-2 3H1z" fill="#1b6f9f" />
      </>
    ),
  },
  {
    name: "Teams",
    badge: "1",
    art: (
      <>
        <path d="M9 7h12v10a5 5 0 0 1-5 5H9z" fill="#7b83eb" />
        <circle cx="13" cy="4" r="3" fill="#7b83eb" />
        <path d="M0 6h12v12H0z" fill="#4b53bc" />
        <path d="M3 9h6M6 9v6.5" stroke="#fff" strokeWidth="1.6" />
      </>
    ),
  },
  {
    name: "Padlock",
    art: (
      <>
        <path d="M6 10V6a5 5 0 0 1 10 0v4" stroke="#b8a24a" strokeWidth="2.5" />
        <path d="M4 12c0-5 14-5 14 0v10H4z" fill="#f2cf1f" />
        <path d="M11 12v6" stroke="#8a6c00" strokeWidth="2" />
      </>
    ),
  },
  {
    name: "Sticky Notes",
    art: (
      <>
        <path d="M1 1h20v21H1z" fill="#3b3b3b" />
        <path d="M11 22v-7h10v1l-6 6z" fill="#ffd500" />
      </>
    ),
  },
  {
    name: "Excel",
    art: (
      <>
        <path d="M6 1h15v21H6z" fill="#21a366" />
        <path d="M6 11h15v11H6z" fill="#107c41" />
        <path d="M0 6h12v12H0z" fill="#0e6b38" />
        <path d="m3.5 9 5 6.5M8.5 9l-5 6.5" stroke="#fff" strokeWidth="1.7" />
      </>
    ),
  },
  {
    name: "Settings",
    art: (
      <>
        <GearShape cx={11} cy={11} r={7.5} color="#7c8793" hole="#dfe6ee" />
        <circle cx="11" cy="11" r="3.8" fill="#1461b8" />
      </>
    ),
  },
];

const Taskbar = () => (
  <footer className="relative flex h-[27px] shrink-0 items-start overflow-hidden border-t border-[#a9b7cc] bg-linear-to-r from-[#dfe9f5] from-20% via-[#d5daf0] via-40% to-[#e0ebf4] font-['Open_Sans',sans-serif] text-[10px]">
    <button className="ml-4 flex items-start gap-1.5 pt-1.5 text-left text-[#222]">
      <svg width="22" height="20" viewBox="0 0 22 20" className="mt-1" aria-hidden="true">
        <path d="M5 14a5 5 0 0 1 0-9 6 6 0 0 1 11-1 5 5 0 0 1 1 10z" fill="#8fa9d8" />
        <path d="M5 14a4 4 0 0 1 0-7c6-2 9 2 10 7z" fill="#b9cdf0" />
        <path d="m11 10 5 6-5 4z" fill="#2d6fe0" />
      </svg>
      <span className="whitespace-nowrap">
        <span className="block leading-[14px]">8°C</span>
        <span className="block leading-[14px] text-[#555]">Lekki deszcz</span>
      </span>
    </button>
    <div className="absolute top-0 left-[31%] flex items-start">
      <button aria-label="Start" className="mt-2.5">
        <WinLogo />
      </button>
      <label className="mt-[7px] ml-3 flex h-8 w-[188px] items-start gap-2 rounded-full bg-[#f1f4fb] pt-1.5 pl-2.5">
        <svg width="13" height="14" viewBox="0 0 13 14" fill="none" aria-hidden="true">
          <circle cx="5.5" cy="5.5" r="4.5" stroke="#333" strokeWidth="1.5" />
          <path d="m9 9 3.5 4.5" stroke="#333" strokeWidth="1.7" />
        </svg>
        <input
          aria-label="Wyszukaj"
          placeholder="Wyszukaj"
          className="h-4 w-28 bg-transparent text-[11px] leading-4 outline-none placeholder:text-[#666]"
        />
      </label>
      <div className="ml-1.5 flex">
        {TASKS.map((t) => (
          <button
            key={t.name}
            aria-label={t.name}
            className={clsx("relative flex h-10 w-[38px] shrink-0 justify-center pt-2", t.active && "rounded-t bg-white/60")}
          >
            <Svg size={22} box={22} className="overflow-visible">
              {t.art}
            </Svg>
            {t.badge && (
              <span className="absolute top-1 right-0 flex h-3.5 w-3.5 items-center justify-center rounded-full bg-[#c42b1c] text-white">
                {t.badge}
              </span>
            )}
          </button>
        ))}
      </div>
    </div>
    <button className="mr-4 ml-auto pt-1.5 text-right leading-[14px] text-[#333]">
      <span className="block">09:59</span>
      <span className="block">14.10.2025</span>
    </button>
  </footer>
);

export default function App() {
  return (
    <div className={clsx("flex h-screen flex-col overflow-hidden bg-black pt-1", UI)}>
      <main className="flex min-h-0 flex-1">
        <MonitorWindow />
        <BackgroundSliver />
        <RfWindow />
      </main>
      <Taskbar />
    </div>
  );
}
